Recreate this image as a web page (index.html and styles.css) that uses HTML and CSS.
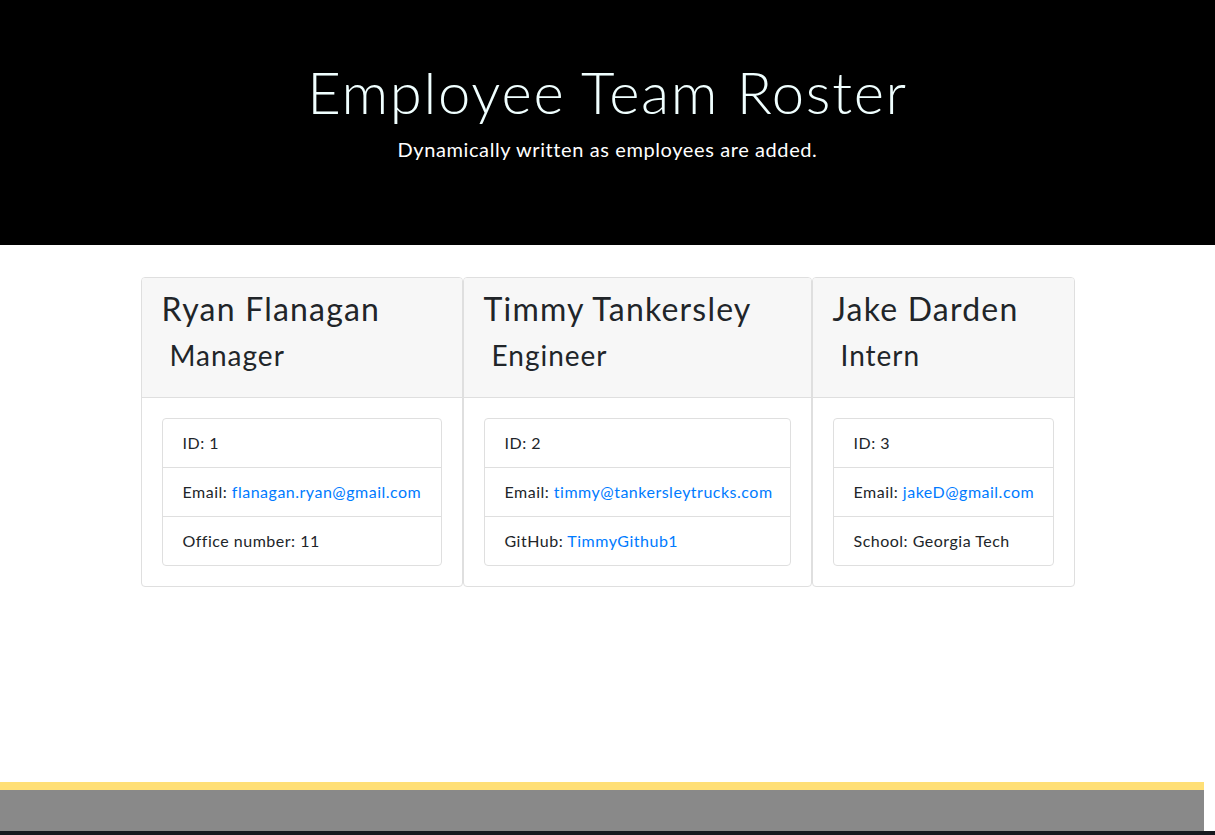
FILE: index.html
```html
<!DOCTYPE html>
<html lang="en">
<head>
<meta charset="utf-8">
<title>Employee Team Roster</title>
<link rel="stylesheet" href="styles.css">
</head>
<body>
<div class="page">
  <header class="hero">
    <h1 class="hero-title">Employee Team Roster</h1>
    <p class="hero-lead">Dynamically written as employees are added.</p>
  </header>

  <main class="roster">
    <section class="card card-manager">
      <div class="card-header">
        <h2 class="card-name">Ryan Flanagan</h2>
        <h3 class="card-role">Manager</h3>
      </div>
      <div class="card-body">
        <ul class="list-group">
          <li class="list-item">ID: 1</li>
          <li class="list-item">Email: <a class="link" href="#">flanagan.ryan@gmail.com</a></li>
          <li class="list-item">Office number: 11</li>
        </ul>
      </div>
    </section>

    <section class="card card-engineer">
      <div class="card-header">
        <h2 class="card-name">Timmy Tankersley</h2>
        <h3 class="card-role">Engineer</h3>
      </div>
      <div class="card-body">
        <ul class="list-group">
          <li class="list-item">ID: 2</li>
          <li class="list-item">Email: <a class="link" href="#">timmy@tankersleytrucks.com</a></li>
          <li class="list-item">GitHub: <a class="link" href="#">TimmyGithub1</a></li>
        </ul>
      </div>
    </section>

    <section class="card card-intern">
      <div class="card-header">
        <h2 class="card-name">Jake Darden</h2>
        <h3 class="card-role">Intern</h3>
      </div>
      <div class="card-body">
        <ul class="list-group">
          <li class="list-item">ID: 3</li>
          <li class="list-item">Email: <a class="link" href="#">jakeD@gmail.com</a></li>
          <li class="list-item">School: Georgia Tech</li>
        </ul>
      </div>
    </section>
  </main>

  <footer class="footer">
    <div class="footer-bar">
      <div class="footer-stripe"></div>
      <div class="footer-body"></div>
    </div>
    <div class="footer-edge"></div>
  </footer>
</div>
</body>
</html>
```

FILE: styles.css
```css
* {
  box-sizing: border-box;
}

html, body {
  margin: 0;
  padding: 0;
}

body {
  font-family: Lato, "Open Sans", "Liberation Sans", sans-serif;
  font-size: 16px;
  line-height: 1.5;
  color: #212529;
  background: #ffffff;
}

.page {
  display: flex;
  flex-direction: column;
  min-height: 835px;
}

/* Hero */
.hero {
  background: #000000;
  height: 245px;
  padding-top: 57px;
  text-align: center;
  color: #f0ffff;
}

.hero-title {
  margin: 0;
  font-size: 58px;
  font-weight: 300;
  line-height: 1.2;
  letter-spacing: 1.7px;
}

.hero-lead {
  margin: 7px 0 0;
  font-size: 20px;
  font-weight: 400;
  line-height: 1.5;
  letter-spacing: 0.6px;
  color: #ffffff;
}

/* Roster */
.roster {
  display: flex;
  justify-content: center;
  align-items: flex-start;
  padding-top: 32px;
}

.card {
  display: flex;
  flex-direction: column;
  flex: 0 0 auto;
  border: 1px solid #dfdfdf;
  border-radius: 4px;
  background: #ffffff;
  overflow: hidden;
}

.card-manager { width: 322px; }
.card-engineer { width: 349px; }
.card-intern { width: 263px; }

.card-header {
  height: 120px;
  padding: 12px 20px 0;
  background: #f7f7f7;
  border-bottom: 1px solid #dfdfdf;
}

.card-name {
  margin: 0 0 11px;
  font-size: 32px;
  font-weight: 400;
  line-height: 1.2;
  letter-spacing: 1.2px;
  white-space: nowrap;
}

.card-role {
  margin: 0;
  padding-left: 8px;
  font-size: 28px;
  font-weight: 400;
  line-height: 1.2;
  letter-spacing: 1px;
  white-space: nowrap;
}

.card-body {
  padding: 20px;
}

.list-group {
  margin: 0;
  padding: 0;
  list-style: none;
  border: 1px solid #dfdfdf;
  border-radius: 4px;
}

.list-item {
  padding: 12px 20px;
  line-height: 24px;
  letter-spacing: 0.5px;
  white-space: nowrap;
}

.list-item + .list-item {
  border-top: 1px solid #dfdfdf;
}

.link {
  color: #007bff;
  text-decoration: none;
}

/* Footer */
.footer {
  margin-top: auto;
}

.footer-bar {
  width: 1204px;
}

.footer-stripe {
  height: 8px;
  background: #ffdf76;
}

.footer-body {
  height: 41px;
  background: #898989;
}

.footer-edge {
  height: 4px;
  background: #16191f;
}
```
